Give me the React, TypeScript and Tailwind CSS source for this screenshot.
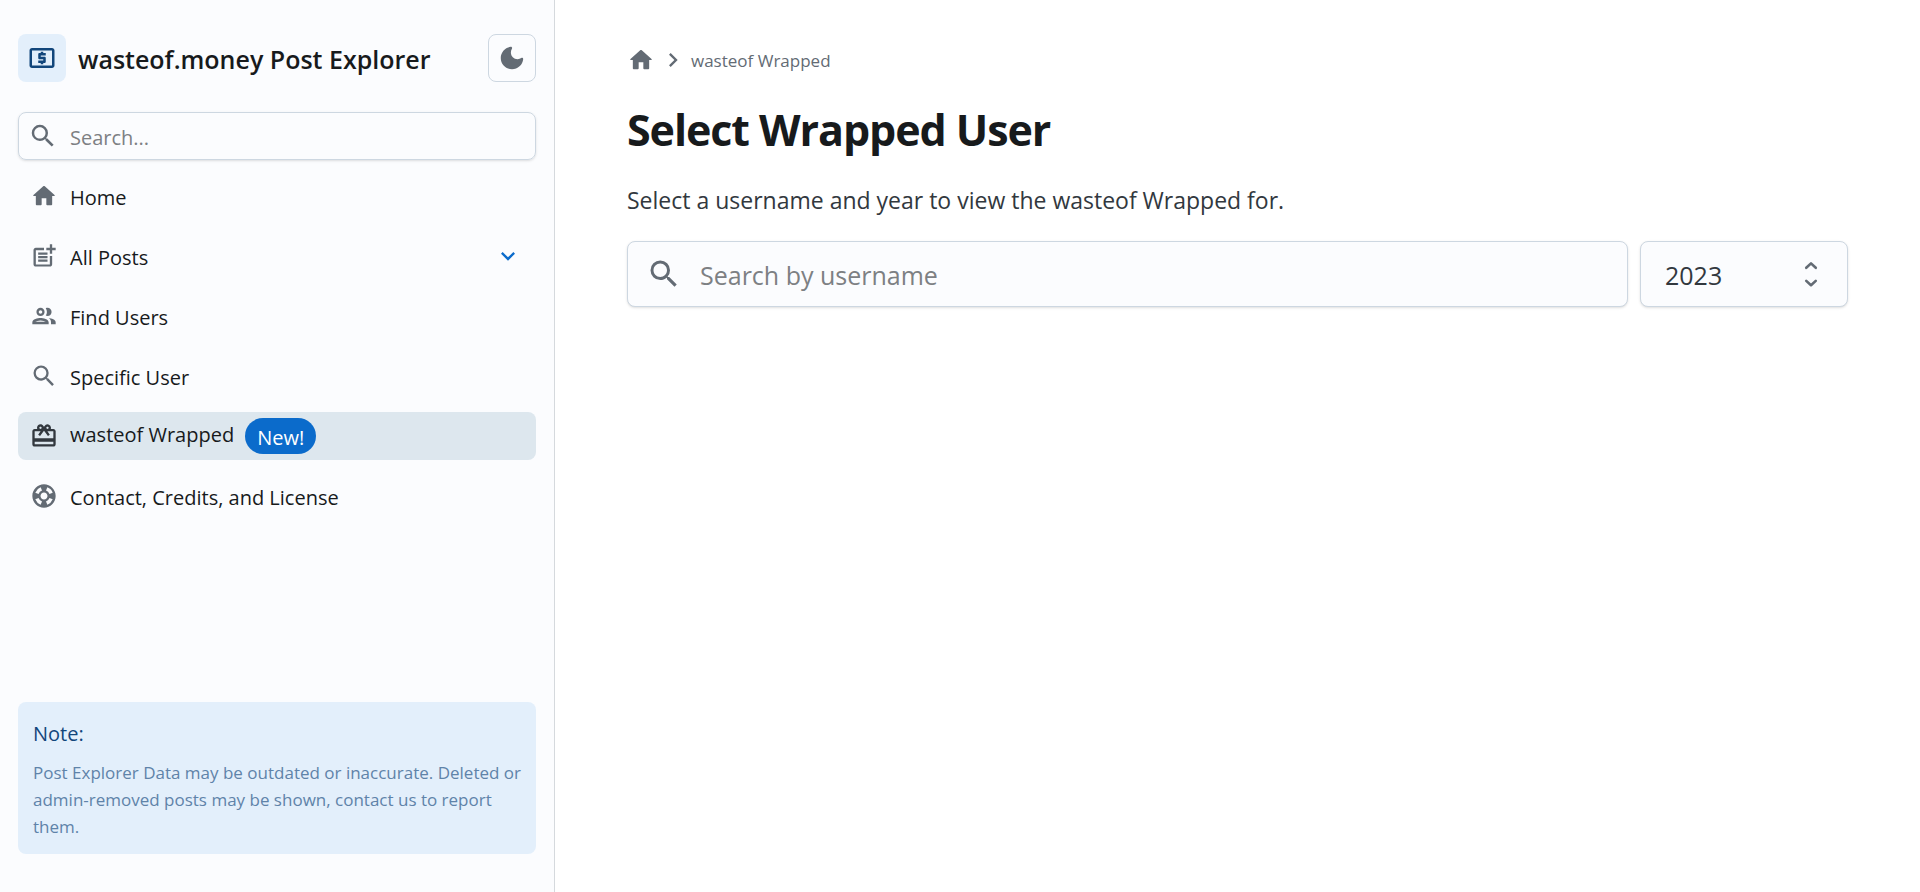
import type { ComponentType } from "react";
import {
  MdChevronRight,
  MdKeyboardArrowDown,
  MdOutlineGroup,
  MdOutlineLocalAtm,
  MdOutlineRedeem,
  MdPostAdd,
  MdSearch,
  MdSupport,
} from "react-icons/md";

type IconProps = { className?: string };

function HomeIcon({ className }: IconProps) {
  return (
    <svg viewBox="0 0 24 24" fill="currentColor" aria-hidden="true" className={className}>
      <path d="M10 19v-5h4v5c0 .55.45 1 1 1h3c.55 0 1-.45 1-1v-7h1.7c.46 0 .68-.57.33-.87L12.67 3.6c-.38-.34-.96-.34-1.34 0l-8.36 7.53c-.34.3-.13.87.33.87H5v7c0 .55.45 1 1 1h3c.55 0 1-.45 1-1z" />
    </svg>
  );
}

function MoonIcon({ className }: IconProps) {
  return (
    <svg viewBox="0 0 24 24" fill="currentColor" aria-hidden="true" className={className}>
      <path d="M11.01 3.05C6.51 3.54 3 7.36 3 12c0 4.97 4.03 9 9 9 4.63 0 8.45-3.5 8.95-8 .09-.79-.78-1.42-1.54-.95-.84.54-1.84.85-2.91.85-2.98 0-5.4-2.42-5.4-5.4 0-1.06.31-2.06.84-2.89.45-.67-.04-1.63-.93-1.56z" />
    </svg>
  );
}

function UnfoldIcon({ className }: IconProps) {
  return (
    <svg
      viewBox="0 0 24 24"
      fill="none"
      stroke="currentColor"
      strokeWidth="2.1"
      strokeLinecap="round"
      strokeLinejoin="round"
      aria-hidden="true"
      className={className}
    >
      <path d="M8.2 7 12 3.5 15.8 7M8.2 17.5 12 21l3.8-3.5" />
    </svg>
  );
}

type Item = {
  label: string;
  icon: ComponentType<IconProps>;
  active?: boolean;
  badge?: string;
  expandable?: boolean;
};

const items: Item[] = [
  { label: "Home", icon: HomeIcon },
  { label: "All Posts", icon: MdPostAdd, expandable: true },
  { label: "Find Users", icon: MdOutlineGroup },
  { label: "Specific User", icon: MdSearch },
  { label: "wasteof Wrapped", icon: MdOutlineRedeem, active: true, badge: "New!" },
  { label: "Contact, Credits, and License", icon: MdSupport },
];

function NavItem({ label, icon: Icon, active, badge, expandable }: Item) {
  const row = active
    ? "flex h-12 w-full items-center rounded-lg bg-[#dde7ee] px-3 text-left text-[#171a1c]"
    : "flex h-12 w-full items-center rounded-lg px-3 text-left text-[#171a1c]";
  const content = (
    <>
      <Icon className={active ? "mr-3 size-7 text-[#32383e]" : "mr-3 size-7 text-[#636b74]"} />
      <span className={badge ? "pb-0.5" : "pt-1"}>{label}</span>
      {badge && (
        <span className="ml-[11px] flex h-9 items-center rounded-full bg-[#0b6bcb] px-3 pt-1 text-white">{badge}</span>
      )}
      {expandable && <MdKeyboardArrowDown className="mr-0.5 ml-auto size-7 text-[#0b6bcb]" />}
    </>
  );
  return (
    <li>
      {expandable ? (
        <button type="button" aria-expanded="false" className={row}>
          {content}
        </button>
      ) : (
        <a href="#" className={row}>
          {content}
        </a>
      )}
    </li>
  );
}

function Sidebar() {
  return (
    <aside className="flex w-[555px] shrink-0 flex-col border-r border-[#d5d9dd] bg-[#fbfcfe] px-[18px] pt-[34px] pb-[38px] text-xl">
      <header className="flex items-center gap-3">
        <span className="flex size-12 items-center justify-center rounded-lg bg-[#e3effb] text-[#12467b]">
          <MdOutlineLocalAtm className="size-[30px]" />
        </span>
        <h2 className="pt-0.5 text-[25px] font-semibold text-[#171a1c]">wasteof.money Post Explorer</h2>
        <button
          type="button"
          aria-label="Toggle dark mode"
          className="ml-auto flex size-12 items-center justify-center rounded-lg border border-[#cdd7e1] text-[#636b74]"
        >
          <MoonIcon className="size-[30px]" />
        </button>
      </header>
      <label className="mt-[30px] flex h-12 shrink-0 items-center rounded-lg border border-[#cdd7e1] px-[9px] shadow-sm">
        <MdSearch className="mr-3 size-[30px] text-[#636b74]" />
        <input
          type="text"
          aria-label="Search"
          placeholder="Search..."
          className="min-w-0 flex-1 bg-transparent pt-1 outline-none placeholder:text-[#7d8083]"
        />
      </label>
      <nav className="mt-3">
        <ul className="flex flex-col gap-3">
          {items.map((item) => (
            <NavItem key={item.label} {...item} />
          ))}
        </ul>
      </nav>
      <section className="mt-auto rounded-lg bg-[#e3effb] px-[15px] pt-[17px] pb-3.5">
        <h3 className="leading-[30px] text-[#12467b]">Note:</h3>
        <p className="mt-2.5 text-[17px] leading-[27px] text-[#5f83a9]">
          Post Explorer Data may be outdated or inaccurate. Deleted or admin-removed posts may be shown, contact us to
          report them.
        </p>
      </section>
    </aside>
  );
}

export default function App() {
  return (
    <div className="flex min-h-screen bg-white font-['Open_Sans','Noto_Sans',sans-serif]">
      <Sidebar />
      <main className="min-w-0 flex-1 px-[72px] pt-[46px]">
        <nav aria-label="Breadcrumb" className="flex h-7 items-center gap-1 text-[17px] text-[#636b74]">
          <a href="#" aria-label="Home">
            <HomeIcon className="size-7" />
          </a>
          <MdChevronRight className="size-7" />
          <span className="pt-0.5">wasteof Wrapped</span>
        </nav>
        <h1 className="mt-7 text-[43px] leading-[56px] font-bold tracking-tight text-[#171a1c]">Select Wrapped User</h1>
        <p className="mt-6 text-[23px] leading-9 text-[#32383e]">
          Select a username and year to view the wasteof Wrapped for.
        </p>
        <form className="mt-[23px] flex gap-3 text-[25px]">
          <label className="flex h-[66px] min-w-0 flex-1 items-center rounded-lg border border-[#cdd7e1] bg-[#fbfcfe] px-[18px] shadow-sm">
            <MdSearch className="mr-[18px] size-9 text-[#636b74]" />
            <input
              type="text"
              aria-label="Username"
              placeholder="Search by username"
              className="min-w-0 flex-1 bg-transparent pt-1 outline-none placeholder:text-[#7d8083]"
            />
          </label>
          <div className="relative w-52">
            <select
              aria-label="Year"
              defaultValue="2023"
              className="h-[66px] w-full appearance-none rounded-lg border border-[#cdd7e1] bg-[#fbfcfe] px-6 pt-1 text-[#32383e] shadow-sm"
            >
              <option>2023</option>
            </select>
            <UnfoldIcon className="pointer-events-none absolute top-[18px] right-[22px] size-[30px] text-[#636b74]" />
          </div>
        </form>
      </main>
    </div>
  );
}
